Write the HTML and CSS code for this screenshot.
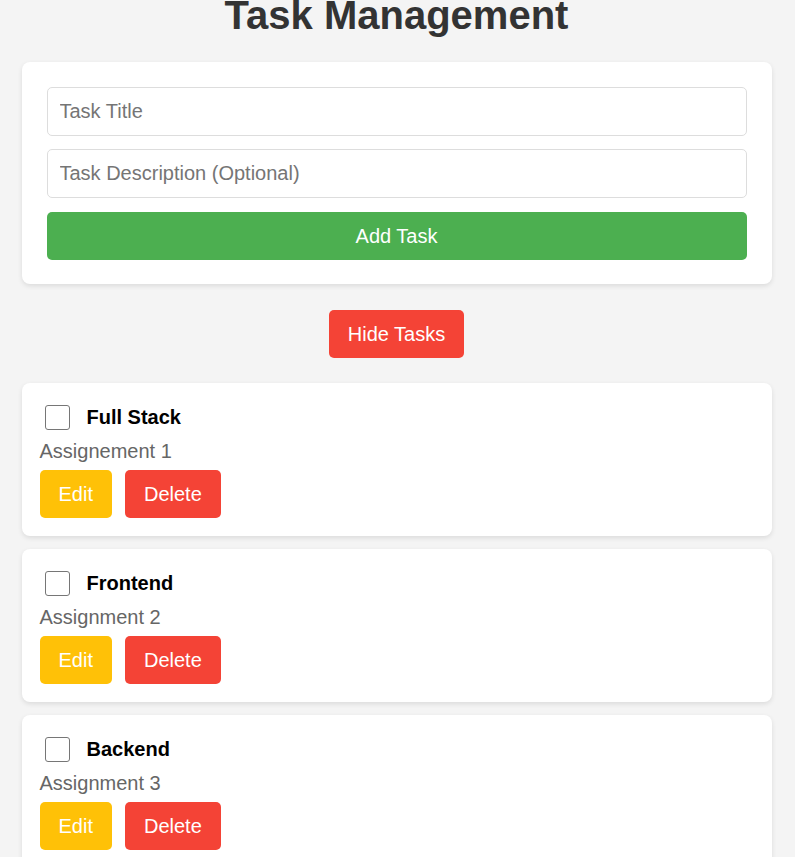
FILE: index.html
```html
<!DOCTYPE html>
<html lang="en">
<head>
<meta charset="utf-8">
<title>Task Management</title>
<link rel="stylesheet" href="styles.css">
</head>
<body>
<div class="container">
  <h1 class="title">Task Management</h1>
  <div class="form-card">
    <input class="field" type="text" placeholder="Task Title">
    <input class="field" type="text" placeholder="Task Description (Optional)">
    <button class="btn btn-add">Add Task</button>
  </div>
  <div class="toggle-row">
    <button class="btn btn-red btn-toggle">Hide Tasks</button>
  </div>
  <div class="task-list">
    <div class="task-card">
      <div class="task-head">
        <input class="check" type="checkbox">
        <span class="task-title">Full Stack</span>
      </div>
      <p class="task-desc">Assignement 1</p>
      <div class="task-actions">
        <button class="btn btn-yellow">Edit</button>
        <button class="btn btn-red">Delete</button>
      </div>
    </div>
    <div class="task-card">
      <div class="task-head">
        <input class="check" type="checkbox">
        <span class="task-title">Frontend</span>
      </div>
      <p class="task-desc">Assignment 2</p>
      <div class="task-actions">
        <button class="btn btn-yellow">Edit</button>
        <button class="btn btn-red">Delete</button>
      </div>
    </div>
    <div class="task-card">
      <div class="task-head">
        <input class="check" type="checkbox">
        <span class="task-title">Backend</span>
      </div>
      <p class="task-desc">Assignment 3</p>
      <div class="task-actions">
        <button class="btn btn-yellow">Edit</button>
        <button class="btn btn-red">Delete</button>
      </div>
    </div>
  </div>
</div>
</body>
</html>
```

FILE: styles.css
```css
* { box-sizing: border-box; }
html, body { margin: 0; padding: 0; }
body {
  background: #f4f4f4;
  font-family: "Liberation Sans", Arial, sans-serif;
  overflow: hidden;
}
.container {
  width: 750px;
  margin: 0 auto;
  position: relative;
  left: -1px;
}
.title {
  margin: -8px 0 24px;
  font-size: 40px;
  line-height: 46px;
  font-weight: bold;
  color: #333;
  text-align: center;
}
.form-card {
  background: #fff;
  border-radius: 8px;
  box-shadow: 0 2px 5px rgba(0,0,0,0.1);
  padding: 25px 25px 24px;
  display: flex;
  flex-direction: column;
}
.field {
  height: 49px;
  margin: 0 0 13px;
  padding: 0 12px;
  border: 1px solid #ddd;
  border-radius: 5px;
  font-family: "Liberation Sans", Arial, sans-serif;
  font-size: 20px;
  color: #333;
  background: #fff;
  outline: none;
}
.field::placeholder { color: #757575; }
.btn {
  height: 48px;
  padding: 0 19px;
  border: none;
  border-radius: 5px;
  font-family: "Liberation Sans", Arial, sans-serif;
  font-size: 20px;
  color: #fff;
  white-space: nowrap;
  cursor: pointer;
}
.btn-add {
  background: #4caf50;
  margin-top: 1px;
}
.btn-red { background: #f44336; }
.btn-yellow { background: #ffc107; }
.toggle-row {
  display: flex;
  justify-content: center;
  margin: 26px 0 25px;
}
.btn-toggle {
  width: 135px;
  padding: 0;
}
.task-list {
  display: flex;
  flex-direction: column;
  gap: 13px;
}
.task-card {
  background: #fff;
  border-radius: 8px;
  box-shadow: 0 2px 5px rgba(0,0,0,0.1);
  padding: 18px 18px 18px;
}
.task-head {
  display: flex;
  align-items: center;
  height: 33px;
}
.check {
  appearance: none;
  -webkit-appearance: none;
  width: 25px;
  height: 25px;
  margin: 0 17px 0 5px;
  border: 1px solid #767676;
  border-radius: 3px;
  background: #fff;
}
.task-title {
  font-size: 20px;
  font-weight: bold;
  color: #000;
}
.task-desc {
  margin: 6px 0 8px;
  font-size: 20px;
  line-height: 22px;
  color: #666;
}
.task-actions {
  display: flex;
  gap: 13px;
}
```
